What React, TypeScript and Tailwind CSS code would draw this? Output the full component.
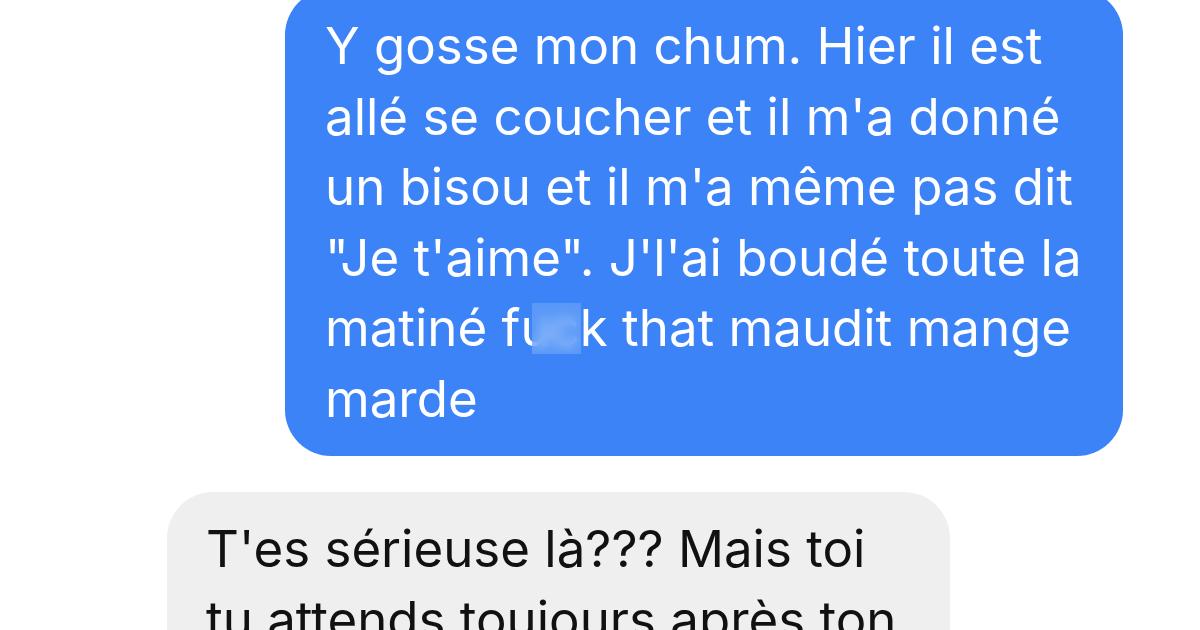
import React from 'react';

const sent = [
  'Y gosse mon chum. Hier il est',
  "allé se coucher et il m'a donné",
  "un bisou et il m'a même pas dit",
  "\"Je t'aime\". J'l'ai boudé toute la",
];

const received = ["T'es sérieuse là??? Mais toi", 'tu attends toujours après ton'];

const Censored: React.FC<{ children: React.ReactNode }> = ({ children }) => (
  <span className="relative">
    {children}
    <span className="absolute left-[-19px] right-[-1px] top-[6px] bottom-[4px] backdrop-blur-[6px] bg-[#6ea6f8]/60" />
  </span>
);

export default function App() {
  return (
    <div
      className="w-[1200px] h-[630px] overflow-hidden bg-white flex flex-col"
      style={{ fontFamily: 'Inter, "Liberation Sans", Arial, sans-serif' }}
    >
      <div className="ml-[285px] mt-[-11px] w-[838px] rounded-[46px] bg-[#3b83f6] pl-[40px] pr-4 py-[22px] text-white text-[51px] leading-[70.5px] whitespace-nowrap">
        {sent.map((line) => (
          <div key={line}>{line}</div>
        ))}
        <div>
          matiné fu<Censored>c</Censored>k that maudit mange
        </div>
        <div>marde</div>
      </div>

      <div className="ml-[167px] mt-[36px] w-[783px] rounded-[46px] bg-[#efefef] pl-[39px] pr-4 pt-[22px] pb-[22px] text-[#111] text-[51px] leading-[70.5px] whitespace-nowrap">
        {received.map((line) => (
          <div key={line}>{line}</div>
        ))}
        <div>mec qu'il te dise</div>
      </div>
    </div>
  );
}
